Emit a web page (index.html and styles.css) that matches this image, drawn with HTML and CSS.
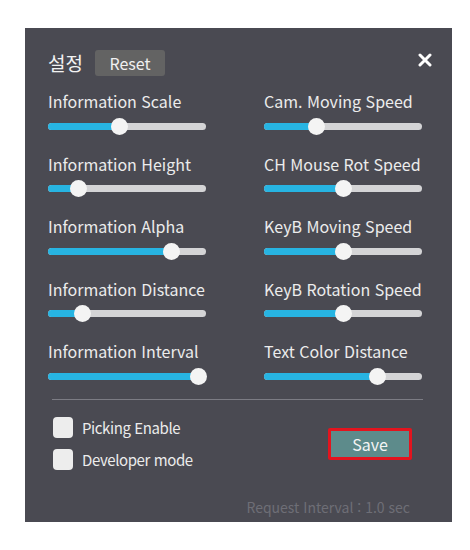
FILE: index.html
```html
<!DOCTYPE html>
<html lang="ko">
<head>
<meta charset="utf-8">
<title>설정</title>
<link rel="stylesheet" href="styles.css">
</head>
<body>
<div class="panel">
  <div class="header">
    <span class="title">설정</span>
    <button class="reset">Reset</button>
    <span class="close">
      <svg width="14" height="14" viewBox="0 0 14 14"><path d="M2 2 L12 12 M12 2 L2 12" stroke="#fff" stroke-width="3" stroke-linecap="round"/></svg>
    </span>
  </div>
  <div class="grid">
    <div class="item"><div class="label">Information Scale</div><div class="slider"><div class="track"><div class="fill" style="width:45.5%"></div><span class="thumb" style="left:45.5%"></span></div></div></div>
    <div class="item"><div class="label">Cam. Moving Speed</div><div class="slider"><div class="track"><div class="fill" style="width:33%"></div><span class="thumb" style="left:33%"></span></div></div></div>
    <div class="item"><div class="label">Information Height</div><div class="slider"><div class="track"><div class="fill" style="width:19%"></div><span class="thumb" style="left:19%"></span></div></div></div>
    <div class="item"><div class="label">CH Mouse Rot Speed</div><div class="slider"><div class="track"><div class="fill" style="width:50%"></div><span class="thumb" style="left:50%"></span></div></div></div>
    <div class="item"><div class="label">Information Alpha</div><div class="slider"><div class="track"><div class="fill" style="width:78%"></div><span class="thumb" style="left:78%"></span></div></div></div>
    <div class="item"><div class="label">KeyB Moving Speed</div><div class="slider"><div class="track"><div class="fill" style="width:50%"></div><span class="thumb" style="left:50%"></span></div></div></div>
    <div class="item"><div class="label">Information Distance</div><div class="slider"><div class="track"><div class="fill" style="width:22%"></div><span class="thumb" style="left:22%"></span></div></div></div>
    <div class="item"><div class="label">KeyB Rotation Speed</div><div class="slider"><div class="track"><div class="fill" style="width:50%"></div><span class="thumb" style="left:50%"></span></div></div></div>
    <div class="item"><div class="label">Information Interval</div><div class="slider"><div class="track"><div class="fill" style="width:95%"></div><span class="thumb" style="left:95%"></span></div></div></div>
    <div class="item"><div class="label">Text Color Distance</div><div class="slider"><div class="track"><div class="fill" style="width:72%"></div><span class="thumb" style="left:72%"></span></div></div></div>
  </div>
  <div class="divider"></div>
  <div class="options">
    <div class="checks">
      <label class="check"><span class="box"></span>Picking Enable</label>
      <label class="check"><span class="box"></span>Developer mode</label>
    </div>
    <button class="save">Save</button>
  </div>
  <div class="footer">Request Interval : 1.0 sec</div>
</div>
</body>
</html>
```
FILE: styles.css
```css
html, body {
  margin: 0;
  padding: 0;
  background: #ffffff;
}
body {
  font-family: "Noto Sans CJK KR", "Noto Sans", sans-serif;
}
.panel {
  margin: 28px 0 0 25px;
  width: 427px;
  height: 494px;
  box-sizing: border-box;
  background: #4a4a52;
  padding: 22px 30px 0 23px;
  color: #ececec;
}
.header {
  display: flex;
  align-items: center;
  height: 26px;
}
.title {
  font-size: 19px;
  line-height: 26px;
  color: #f2f2f2;
}
.reset {
  margin-left: 12px;
  width: 70px;
  height: 26px;
  border: none;
  border-radius: 3px;
  background: #636363;
  color: #f0f0f0;
  font-family: inherit;
  font-size: 16px;
  line-height: 26px;
  padding: 0;
}
.close {
  margin-left: auto;
  margin-right: -10px;
  display: flex;
  width: 14px;
  height: 14px;
  margin-top: -7px;
}
.grid {
  margin-top: 14px;
  display: grid;
  grid-template-columns: 158px 158px;
  column-gap: 58px;
  row-gap: 12.5px;
}
.label {
  font-size: 16px;
  line-height: 22px;
  white-space: nowrap;
  color: #ececec;
}
.slider {
  height: 28px;
  display: flex;
  align-items: center;
}
.track {
  position: relative;
  width: 100%;
  height: 7px;
  border-radius: 4px;
  background: #d4d4d6;
}
.fill {
  height: 100%;
  border-radius: 4px;
  background: #27b4e2;
}
.thumb {
  position: absolute;
  top: 50%;
  width: 17px;
  height: 17px;
  margin: -8.5px 0 0 -8.5px;
  border-radius: 50%;
  background: #f4f4f4;
}
.divider {
  margin: 9px 0 0 4px;
  width: 371px;
  height: 1px;
  background: #7c7c84;
}
.options {
  margin-top: 17px;
  display: flex;
  align-items: center;
  justify-content: space-between;
  padding-left: 5px;
  padding-right: 10px;
}
.checks {
  display: flex;
  flex-direction: column;
  gap: 11px;
}
.check {
  display: flex;
  align-items: center;
  gap: 9px;
  font-size: 15px;
  line-height: 21px;
  letter-spacing: -0.4px;
  color: #ececec;
}
.box {
  width: 20px;
  height: 21px;
  border-radius: 4px;
  background: #ededed;
}
.save {
  width: 84px;
  height: 32px;
  box-sizing: border-box;
  border: 3px solid #e3141e;
  border-radius: 2px;
  background: #5d8b8b;
  color: #f4f4f4;
  font-family: inherit;
  font-size: 16px;
  padding: 0;
  line-height: 26px;
}
.footer {
  margin-top: 28px;
  text-align: right;
  padding-right: 12px;
  font-size: 14px;
  line-height: 18px;
  color: #6e6e76;
}
```
